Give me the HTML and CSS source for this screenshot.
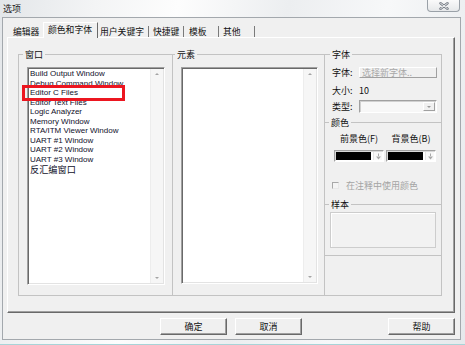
FILE: index.html
```html
<!DOCTYPE html>
<html>
<head>
<meta charset="utf-8">
<title>选项</title>
<link rel="stylesheet" href="styles.css">
</head>
<body>
<div class="window">
  <div class="titlebar">
    <span class="title">选项</span>
    <div class="close">
      <svg width="10" height="8" viewBox="0 0 10 8"><path d="M1.5 1.2L8.5 6.8M8.5 1.2L1.5 6.8" stroke="#707780" stroke-width="2.4" stroke-linecap="round"/><path d="M1.5 1.2L8.5 6.8M8.5 1.2L1.5 6.8" stroke="#ffffff" stroke-width="0.9" stroke-linecap="round"/></svg>
    </div>
  </div>
  <div class="client">
    <div class="tabs">
      <div class="tab t1">编辑器</div>
      <div class="tab t2 active">颜色和字体</div>
      <div class="tab t3">用户关键字</div>
      <div class="tab t4">快捷键</div>
      <div class="tab t5">模板</div>
      <div class="tab t6">其他</div>
    </div>
    <div class="panel">
      <div class="groups">
        <fieldset class="group g-window">
          <legend>窗口</legend>
          <div class="listbox lb1">
            <ul class="items">
              <li>Build Output Window</li>
              <li>Debug Command Window</li>
              <li>Editor C Files</li>
              <li>Editor Text Files</li>
              <li>Logic Analyzer</li>
              <li>Memory Window</li>
              <li>RTA/ITM Viewer Window</li>
              <li>UART #1 Window</li>
              <li>UART #2 Window</li>
              <li>UART #3 Window</li>
              <li class="cjk">反汇编窗口</li>
            </ul>
            <div class="vscroll"><span class="arr up"></span><span class="arr down"></span></div>
            <div class="callout"></div>
          </div>
        </fieldset>
        <fieldset class="group g-elem">
          <legend>元素</legend>
          <div class="listbox lb2">
            <ul class="items"></ul>
            <div class="vscroll"><span class="arr up"></span><span class="arr down"></span></div>
          </div>
        </fieldset>
        <fieldset class="group g-font">
          <legend>字体</legend>
          <div class="row r-font">
            <span class="lbl">字体:</span>
            <div class="btn-dis">选择新字体..</div>
          </div>
          <div class="row r-size">
            <span class="lbl">大小:</span>
            <span>10</span>
          </div>
          <div class="row r-type">
            <span class="lbl">类型:</span>
            <div class="combo"><span class="combo-arrow"><span class="tri"></span></span></div>
          </div>
          <div class="sep s-color"><span>颜色</span></div>
          <div class="row r-clabels">
            <span class="clabel">前景色(F)</span>
            <span class="clabel">背景色(B)</span>
          </div>
          <div class="row r-combos">
            <div class="ccombo"><span class="swatch"></span><span class="carrow"><svg width="7" height="7" viewBox="0 0 7 7"><path d="M3.5 0.5V3" stroke="#a8a8a8" stroke-width="1"/><path d="M1 3.5H6L3.5 6.5Z" fill="#a8a8a8"/></svg></span></div>
            <div class="ccombo"><span class="swatch"></span><span class="carrow"><svg width="7" height="7" viewBox="0 0 7 7"><path d="M3.5 0.5V3" stroke="#a8a8a8" stroke-width="1"/><path d="M1 3.5H6L3.5 6.5Z" fill="#a8a8a8"/></svg></span></div>
          </div>
          <div class="row r-check">
            <span class="checkbox"></span>
            <span class="dis">在注释中使用颜色</span>
          </div>
          <div class="sep s-sample"><span>样本</span></div>
          <div class="sample"></div>
          <div class="hline"></div>
        </fieldset>
      </div>
    </div>
    <div class="buttons">
      <div class="btn b-ok">确定</div>
      <div class="btn b-cancel">取消</div>
      <div class="btn b-help">帮助</div>
    </div>
  </div>
</div>
</body>
</html>
```
FILE: styles.css
```css
* { box-sizing: border-box; margin: 0; padding: 0; }
html, body { width: 465px; height: 345px; overflow: hidden; }
body {
  font-family: "Noto Sans CJK SC", "Liberation Sans", sans-serif;
  font-size: 9px;
  color: #111;
  background: linear-gradient(100deg, #e3e6e9 0%, #f3f4f5 18%, #fdfdfd 34%, #eceef0 55%, #f7f8f9 74%, #e6e9ec 100%);
}
.window {
  height: 345px;
  display: flex;
  flex-direction: column;
  border-bottom: 1px solid #a8d4d8;
}
.titlebar {
  height: 17px;
  display: flex;
  justify-content: space-between;
  align-items: flex-start;
  padding-left: 3px;
}
.title { line-height: 18px; color: #1a1a1a; }
.close {
  width: 33px;
  height: 12px;
  margin-right: 5px;
  border: 1px solid #9aa1a8;
  border-top: none;
  border-radius: 0 0 4px 4px;
  background: linear-gradient(#fafafa, #e6e8ea);
  display: flex;
  align-items: center;
  justify-content: center;
}
.client {
  margin: 0 4px 0 2px;
  height: 323px;
  border: 1px solid #a3a8ad;
  background: #f0f0f0;
  padding: 4px 0 0 4px;
}
/* tabs */
.tabs {
  display: flex;
  align-items: flex-end;
  height: 15px;
  position: relative;
  z-index: 1;
}
.tab {
  height: 11px;
  line-height: 11px;
  border-right: 1px solid #7a7a7a;
  white-space: nowrap;
  font-size: 8.8px;
}
.t1 { width: 36px; padding-left: 6px; border-right: none; }
.t2 { width: 55px; padding-left: 4px; }
.t3 { width: 51px; padding-left: 2px; }
.t4 { width: 35px; padding-left: 4px; }
.t5 { width: 35px; padding-left: 5px; }
.t6 { width: 36px; padding-left: 4px; }
.tab.active {
  height: 16px;
  line-height: 14px;
  margin-bottom: -1px;
  background: #f0f0f0;
  border-top: 1px solid #fff;
  border-left: 1px solid #fff;
  border-right: 1px solid #696969;
}
/* panel */
.panel {
  width: 448px;
  height: 276px;
  border-top: 1px solid #fff;
  border-left: 1px solid #fff;
  border-right: 1px solid #696969;
  border-bottom: 1px solid #696969;
  box-shadow: inset -1px -1px 0 #a0a0a0;
}
.groups {
  display: flex;
  margin: 11px 0 0 10px;
  height: 247px;
}
.group {
  border: 1px solid #c3c3c3;
  min-width: 0;
  height: 247px;
}
.group legend {
  line-height: 11px;
  padding: 0 2px;
}
.g-window { width: 155px; position: relative; }
.g-window legend { margin-left: 4px; }
.g-elem { width: 152px; border-left: none; }
.g-elem legend { margin-left: 2px; }
.g-font { width: 117px; border-left: none; }
.g-font legend { margin-left: 5px; }
/* listboxes */
.listbox {
  position: relative;
  display: flex;
  margin-top: 7px;
  background: #fff;
  border: 1px solid;
  border-color: #a0a0a0 #fff #fff #a0a0a0;
  box-shadow: inset 1px 1px 0 #696969, inset -1px -1px 0 #e3e3e3;
  padding: 1px;
}
.lb1 { margin-left: 8px; width: 138px; height: 218px; }
.lb2 { margin-left: 8px; width: 137px; height: 217px; }
.items {
  flex: 1;
  list-style: none;
  font-family: "Liberation Sans", sans-serif;
  font-size: 8px;
  line-height: 9.5px;
  color: #10102a;
  padding-left: 1px;
}
.items .cjk { font-family: "Noto Sans CJK SC", sans-serif; font-size: 9.2px; line-height: 10px; }
.vscroll {
  width: 13px;
  background: #f6f6f6;
  border-left: 1px solid #ededed;
  display: flex;
  flex-direction: column;
  justify-content: space-between;
  align-items: center;
  padding: 4px 0 4px;
}
.arr { width: 0; height: 0; border-left: 2.5px solid transparent; border-right: 2.5px solid transparent; }
.arr.up { border-bottom: 2.5px solid #a4a4a4; }
.arr.down { border-top: 2.5px solid #a4a4a4; }
.callout {
  position: absolute;
  left: -6px;
  top: 17px;
  width: 103px;
  height: 16px;
  border: 3px solid #ec1620;
}
/* right column */
.row { display: flex; align-items: center; }
.lbl { width: 27px; }
.r-font { margin-top: 7px; height: 11px; padding-left: 7px; }
.btn-dis {
  width: 78px;
  height: 11px;
  line-height: 10px;
  padding-left: 2px;
  color: #a8a8a8;
  border: 1px solid;
  border-color: #fff #a0a0a0 #a0a0a0 #fff;
  white-space: nowrap;
  overflow: hidden;
}
.r-size { margin-top: 7px; height: 10px; padding-left: 7px; }
.r-type { margin-top: 5px; height: 13px; padding-left: 7px; }
.combo {
  width: 78px;
  height: 13px;
  background: #f7f7f7;
  border: 1px solid;
  border-color: #a0a0a0 #fff #fff #a0a0a0;
  box-shadow: inset 1px 1px 0 #d0d0d0;
  display: flex;
  justify-content: flex-end;
  padding: 1px;
}
.combo-arrow {
  width: 12px;
  background: #f0f0f0;
  border: 1px solid;
  border-color: #fff #a0a0a0 #a0a0a0 #fff;
  display: flex;
  align-items: center;
  justify-content: center;
}
.tri { width: 0; height: 0; border-left: 2.5px solid transparent; border-right: 2.5px solid transparent; border-top: 2.5px solid #9a9a9a; }
.sep {
  display: flex;
  align-items: center;
  height: 11px;
}
.sep::before { content: ""; width: 4px; border-top: 1px solid #c3c3c3; }
.sep::after { content: ""; flex: 1; border-top: 1px solid #c3c3c3; }
.sep span { padding: 0 2px; line-height: 11px; }
.s-color { margin-top: 4px; }
.r-clabels { margin-top: 5px; height: 10px; padding-left: 9px; gap: 2px; }
.clabel { width: 50px; text-align: center; white-space: nowrap; }
.r-combos { margin-top: 7px; height: 12px; padding-left: 9px; gap: 2px; }
.ccombo {
  width: 50px;
  height: 12px;
  background: #fff;
  border: 1px solid;
  border-color: #a0a0a0 #fff #fff #a0a0a0;
  box-shadow: inset 1px 1px 0 #d8d8d8;
  display: flex;
  padding: 1px;
  gap: 2px;
}
.swatch { width: 35px; background: #000; }
.carrow {
  flex: 1;
  display: flex;
  align-items: center;
  justify-content: center;
  border-left: 1px solid #e4e4e4;
  background: #f8f8f8;
}
.r-check { margin-top: 18px; height: 10px; padding-left: 7px; }
.checkbox {
  width: 7px;
  height: 7px;
  border: 1px solid;
  border-color: #a8a8a8 #e8e8e8 #e8e8e8 #a8a8a8;
  background: #f4f4f4;
  margin-right: 7px;
}
.dis { color: #a4a4a4; white-space: nowrap; }
.s-sample { margin-top: 9px; }
.sample {
  margin: 2px 0 0 5px;
  width: 106px;
  height: 36px;
  border: 1px solid #cdcdcd;
  box-shadow: inset 1px 1px 0 #fff;
  background: #f2f2f2;
}
.hline { margin-top: 7px; border-top: 1px solid #c3c3c3; }
/* buttons */
.buttons {
  display: flex;
  width: 448px;
  margin-top: 5px;
  height: 17px;
}
.btn {
  width: 67px;
  height: 17px;
  line-height: 15px;
  text-align: center;
  background: #f0f0f0;
  border: 1px solid;
  border-color: #fff #696969 #696969 #fff;
  box-shadow: inset -1px -1px 0 #a0a0a0;
}
.b-ok { margin-left: 153px; }
.b-cancel { margin-left: 8px; }
.b-help { margin-left: auto; }
```
